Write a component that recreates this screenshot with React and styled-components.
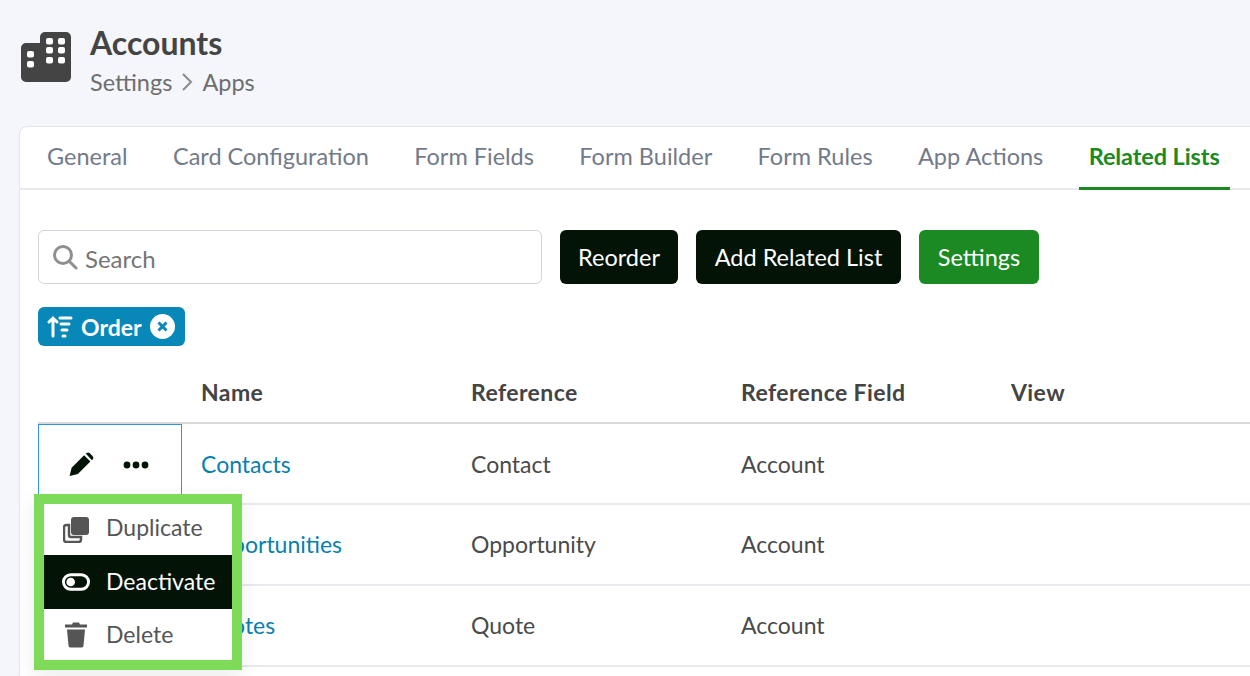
import React from 'react';
import styled, { createGlobalStyle } from 'styled-components';

const GlobalStyle = createGlobalStyle`
  html, body {
    margin: 0;
    height: 100%;
    overflow: hidden;
    background: #f4f6fb;
    font-family: Lato, "Open Sans", sans-serif;
  }
  * { box-sizing: border-box; }
`;

const Page = styled.div`
  width: 1250px;
  height: 676px;
  overflow: hidden;
  padding: 32px 0 0 19px;
`;

const Header = styled.header`
  display: flex;
  gap: 19px;
  height: 94px;
  padding-left: 2px;
`;

const HeaderText = styled.div`
  display: flex;
  flex-direction: column;
  margin-top: -10px;
`;

const PageTitle = styled.h1`
  margin: 0;
  font-size: 32px;
  line-height: 42px;
  font-weight: 700;
  color: #444444;
`;

const Crumbs = styled.div`
  display: flex;
  align-items: center;
  gap: 9px;
  font-size: 23.5px;
  line-height: 36px;
  color: #6e6e6e;
`;

const Card = styled.section`
  width: 1260px;
  height: 560px;
  background: #fff;
  border: 1px solid #e4e5ea;
  border-radius: 8px 0 0 0;
`;

const Tabs = styled.nav`
  display: flex;
  gap: 25.4px;
  height: 63px;
  padding-left: 17px;
  border-bottom: 2px solid #e8e9ec;
`;

const Tab = styled.div`
  padding: 0 10px;
  height: 63px;
  font-size: 23.5px;
  line-height: 58px;
  font-weight: ${p => (p.$active ? 700 : 400)};
  letter-spacing: ${p => (p.$active ? '-0.1px' : '0')};
  color: ${p => (p.$active ? '#1b8a22' : '#737a89')};
  border-bottom: ${p => (p.$active ? '3px solid #1b8a22' : 'none')};
`;

const Body = styled.div`
  padding: 40px 0 0 18px;
`;

const Toolbar = styled.div`
  display: flex;
  gap: 18px;
`;

const SearchBox = styled.div`
  display: flex;
  align-items: center;
  gap: 7px;
  width: 504px;
  height: 54px;
  padding-left: 13px;
  border: 1px solid #d3d3db;
  border-radius: 6px;
  font-size: 24px;
  color: #757575;
`;

const SearchLabel = styled.span`
  padding-top: 2px;
`;

const Button = styled.button`
  height: 54px;
  width: ${p => p.$width}px;
  padding: 0;
  border: none;
  border-radius: 6px;
  font-family: inherit;
  font-size: 23.5px;
  color: #fff;
  background: ${p => (p.$green ? '#1b8a22' : '#031305')};
`;

const Chip = styled.div`
  display: inline-flex;
  align-items: center;
  width: 147px;
  height: 39px;
  margin-top: 23px;
  padding-left: 9px;
  gap: 8px;
  border-radius: 6px;
  background: #0788b9;
  color: #fff;
  font-size: 23px;
  font-weight: 700;
`;

const ChipClose = styled.span`
  display: flex;
  align-items: center;
  justify-content: center;
  width: 25px;
  height: 25px;
  border-radius: 50%;
  background: #fff;
`;

const Table = styled.div`
  position: relative;
  margin-top: 25px;
`;

const Row = styled.div`
  display: grid;
  grid-template-columns: 144px repeat(4, 270px);
  align-items: center;
  height: ${p => (p.$head ? 53 : 81)}px;
  padding-bottom: ${p => (p.$head ? 9 : 0)}px;
  border-bottom: 2px solid ${p => (p.$head ? '#d9d9d9' : '#e8e9ec')};
`;

const HeadCell = styled.div`
  padding-left: 19px;
  font-size: 23px;
  letter-spacing: 0.4px;
  font-weight: 700;
  color: #444444;
`;

const Cell = styled.div`
  padding: 0 0 2px 19px;
  font-size: 23px;
  color: #4a4a4a;
`;

const LinkCell = styled(Cell)`
  color: #0a7fae;
`;

const ActionCell = styled.div`
  display: flex;
  align-items: center;
  justify-content: center;
  gap: 29px;
  height: 81px;
  padding-right: 3px;
  border: 1px solid #2f94e8;
`;

const Menu = styled.div`
  position: absolute;
  left: -4px;
  top: 123px;
  width: 208px;
  height: 176px;
  border: 10px solid #7edb5a;
  background: #fff;
  box-shadow: 0 6px 18px rgba(0, 0, 0, 0.08);
`;

const MenuItem = styled.div`
  display: flex;
  align-items: center;
  gap: 16px;
  height: ${p => (p.$active ? 54 : 51)}px;
  padding-left: 18px;
  font-size: 23px;
  color: ${p => (p.$active ? '#fff' : '#555555')};
  background: ${p => (p.$active ? '#031305' : '#fff')};
`;

const MenuLabel = styled.span`
  padding-bottom: ${p => p.$lift || 0}px;
`;

const IconSlot = styled.span`
  display: flex;
  width: 28px;
  justify-content: center;
`;

const BuildingIcon = () => (
  <svg width="50" height="50" viewBox="0 0 50 50">
    <path d="M24 0h21a5 5 0 0 1 5 5v40a5 5 0 0 1-5 5H5a5 5 0 0 1-5-5V16a5 5 0 0 1 5-5h14V5a5 5 0 0 1 5-5z" fill="#444" />
    {[19, 29].map(y => <rect key={y} x="6" y={y} width="7" height="6.500" rx="2" fill="#fff" />)}
    {[6, 15, 25].flatMap(y => [25, 37].map(x => <rect key={`${x}-${y}`} x={x} y={y} width="7" height="6.500" rx="2" fill="#fff" />))}
  </svg>
);

const Chevron = () => (
  <svg width="12" height="18" viewBox="0 0 12 18" fill="none" stroke="#8a8a8a" strokeWidth="2">
    <path d="M2 1l8 8-8 8" />
  </svg>
);

const SearchIcon = () => (
  <svg width="26" height="26" viewBox="0 0 26 26" fill="none" stroke="#8f8f8f" strokeWidth="3">
    <circle cx="11" cy="11" r="8.500" />
    <path d="M17 17l7 7" strokeLinecap="round" />
  </svg>
);

const SortIcon = () => (
  <svg width="26" height="24" viewBox="0 0 26 24" fill="none" stroke="#fff" strokeWidth="3" strokeLinecap="round">
    <path d="M6 21V3M2 7l4-4 4 4" />
    <path d="M13 3h11M14 9h8M15 15h5M16 21h2" />
  </svg>
);

const CloseIcon = () => (
  <svg width="11" height="11" viewBox="0 0 11 11" fill="none" stroke="#0788b9" strokeWidth="3">
    <path d="M1.500 1.500l8 8M9.500 1.500l-8 8" />
  </svg>
);

const PencilIcon = () => (
  <svg width="26" height="25" viewBox="0 0 24 24" fill="#031305">
    <path d="M1 23l2-8L15 3l6 6L9 21z" />
    <path d="M16.500 1.500l1-.5a2.500 2.500 0 0 1 3 .3l2.700 2.700a2.500 2.500 0 0 1 0 3.200l-.7.800z" />
  </svg>
);

const DotsIcon = () => (
  <svg width="26" height="8" viewBox="0 0 26 8" fill="#031305">
    <circle cx="4" cy="4" r="3.400" />
    <circle cx="13" cy="4" r="3.400" />
    <circle cx="22" cy="4" r="3.400" />
  </svg>
);

const DuplicateIcon = () => (
  <svg width="26" height="26" viewBox="0 0 26 26">
    <rect x="8" y="0" width="18" height="18" rx="3" fill="#555" />
    <path d="M6 8H3.500A2.500 2.500 0 0 0 1 10.500v12A2.500 2.500 0 0 0 3.500 25h12a2.500 2.500 0 0 0 2.500-2.500V20H8a2 2 0 0 1-2-2z" fill="none" stroke="#555" strokeWidth="2.500" />
  </svg>
);

const ToggleIcon = () => (
  <svg width="29" height="18" viewBox="0 0 29 18" fill="none">
    <rect x="1.500" y="1.500" width="26" height="15" rx="7.500" stroke="#fff" strokeWidth="3" />
    <circle cx="9" cy="9" r="4.500" fill="#fff" />
  </svg>
);

const TrashIcon = () => (
  <svg width="24" height="27" viewBox="0 0 24 26" fill="#555">
    <path d="M1 3h7l1-2h6l1 2h7v3H1z" />
    <path d="M3 8h18l-1.500 16a2 2 0 0 1-2 2h-11a2 2 0 0 1-2-2z" />
  </svg>
);

const rows = [
  { name: 'Contacts', reference: 'Contact' },
  { name: 'Opportunities', reference: 'Opportunity' },
  { name: 'Quotes', reference: 'Quote' },
];

const tabs = ['General', 'Card Configuration', 'Form Fields', 'Form Builder', 'Form Rules', 'App Actions', 'Related Lists'];

const App = () => (
  <Page>
    <GlobalStyle />
    <Header>
      <BuildingIcon />
      <HeaderText>
        <PageTitle>Accounts</PageTitle>
        <Crumbs>Settings <Chevron /> Apps</Crumbs>
      </HeaderText>
    </Header>
    <Card>
      <Tabs>
        {tabs.map(tab => (
          <Tab key={tab} $active={tab === 'Related Lists'}>{tab}</Tab>
        ))}
      </Tabs>
      <Body>
        <Toolbar>
          <SearchBox><SearchIcon /><SearchLabel>Search</SearchLabel></SearchBox>
          <Button $width={118}>Reorder</Button>
          <Button $width={205}>Add Related List</Button>
          <Button $width={120} $green>Settings</Button>
        </Toolbar>
        <Chip>
          <SortIcon />
          Order
          <ChipClose><CloseIcon /></ChipClose>
        </Chip>
        <Table>
          <Row $head>
            <span />
            <HeadCell>Name</HeadCell>
            <HeadCell>Reference</HeadCell>
            <HeadCell>Reference Field</HeadCell>
            <HeadCell>View</HeadCell>
          </Row>
          {rows.map((row, i) => (
            <Row key={row.name}>
              {i === 0 ? (
                <ActionCell><PencilIcon /><DotsIcon /></ActionCell>
              ) : <span />}
              <LinkCell>{row.name}</LinkCell>
              <Cell>{row.reference}</Cell>
              <Cell>Account</Cell>
              <span />
            </Row>
          ))}
          <Menu>
            <MenuItem><IconSlot><DuplicateIcon /></IconSlot><MenuLabel $lift={6}>Duplicate</MenuLabel></MenuItem>
            <MenuItem $active><IconSlot><ToggleIcon /></IconSlot><MenuLabel $lift={2}>Deactivate</MenuLabel></MenuItem>
            <MenuItem><IconSlot><TrashIcon /></IconSlot><MenuLabel $lift={2}>Delete</MenuLabel></MenuItem>
          </Menu>
        </Table>
      </Body>
    </Card>
  </Page>
);

export default App;
